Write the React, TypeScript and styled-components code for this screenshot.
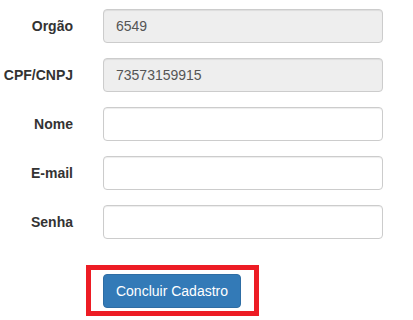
import styled, { createGlobalStyle } from 'styled-components';

const fields = [
  { id: 'orgao', label: 'Orgão', value: '6549', disabled: true },
  { id: 'cpf', label: 'CPF/CNPJ', value: '73573159915', disabled: true },
  { id: 'nome', label: 'Nome', value: '', disabled: false },
  { id: 'email', label: 'E-mail', value: '', disabled: false },
  { id: 'senha', label: 'Senha', value: '', disabled: false },
];

export default function App() {
  return (
    <>
      <GlobalStyle />
      <Form onSubmit={(e) => e.preventDefault()}>
        {fields.map((field) => (
          <Row key={field.id}>
            <Label htmlFor={field.id}>{field.label}</Label>
            <Input
              id={field.id}
              type={field.id === 'senha' ? 'password' : 'text'}
              defaultValue={field.value}
              disabled={field.disabled}
            />
          </Row>
        ))}
        <ButtonRow>
          <Highlight>
            <SubmitButton type='submit'>Concluir Cadastro</SubmitButton>
          </Highlight>
        </ButtonRow>
      </Form>
    </>
  );
}

const GlobalStyle = createGlobalStyle`
  * {
    box-sizing: border-box;
  }
  body {
    margin: 0;
    background: #fff;
    font-family: 'Liberation Sans', Arial, sans-serif;
    font-size: 14px;
    color: #333;
  }
`;

const Form = styled.form`
  display: flex;
  flex-direction: column;
  gap: 15px;
  padding-top: 9px;
`;

const Row = styled.div`
  display: grid;
  grid-template-columns: 73px 280px;
  column-gap: 30px;
  align-items: center;
`;

const Label = styled.label`
  text-align: right;
  font-weight: 700;
  font-size: 14px;
  line-height: 20px;
  color: #333;
  white-space: nowrap;
`;

const Input = styled.input`
  height: 34px;
  width: 100%;
  padding: 6px 12px;
  font-family: inherit;
  font-size: 14px;
  line-height: 20px;
  color: #555;
  background: #fff;
  border: 1px solid #ccc;
  border-radius: 4px;
  box-shadow: inset 0 1px 1px rgba(0, 0, 0, 0.075);
  outline: none;

  &:disabled {
    background: #eee;
    color: #555;
    -webkit-text-fill-color: #555;
    opacity: 1;
  }
`;

const ButtonRow = styled.div`
  display: flex;
  padding-left: 86px;
  margin-top: 11px;
`;

const Highlight = styled.div`
  display: flex;
  border: 5px solid #ed1c24;
  padding: 4px 13px 3px 12px;
`;

const SubmitButton = styled.button`
  height: 34px;
  width: 138px;
  padding: 6px 0;
  font-family: inherit;
  font-size: 14px;
  line-height: 20px;
  white-space: nowrap;
  text-align: center;
  color: #fff;
  background: #337ab7;
  border: 1px solid #2e6da4;
  border-radius: 4px;
  cursor: pointer;
`;
